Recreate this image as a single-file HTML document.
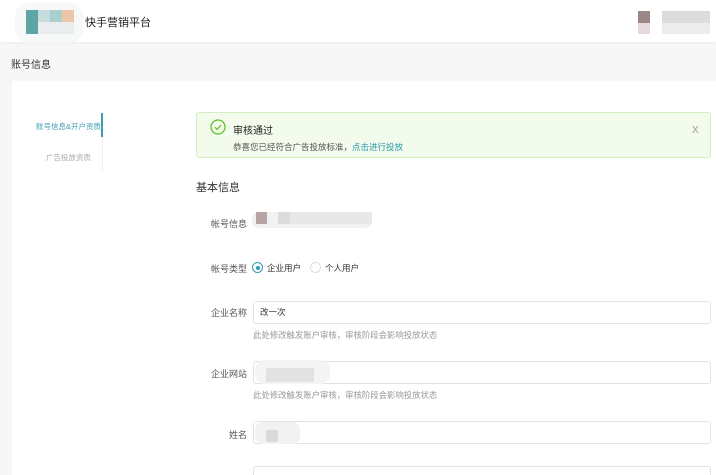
<!DOCTYPE html><html><head><meta charset="utf-8"><style>
*{margin:0;padding:0;box-sizing:border-box}
html,body{width:716px;height:475px;overflow:hidden}
body{background:#f7f7f7;font-family:"Liberation Sans","Noto Sans CJK SC",sans-serif;color:#333;position:relative}
.a{position:absolute;white-space:nowrap}
.hd{left:0;top:0;width:716px;height:42px;background:#fff;box-shadow:0 1px 3px rgba(0,0,0,.05)}
.card{left:12px;top:81px;width:704px;height:394px;background:#fff}
.lbl{font-size:9px;color:#555;text-align:right;width:60px;left:187px}
.inp{left:253px;width:458px;height:23px;border:1px solid #e3e3e3;border-radius:3px;background:#fff}
.hint{left:253px;font-size:8.4px;color:#999}
.px{position:absolute}
</style></head><body>
<div class="a hd"></div>
<div class="px" style="left:15px;top:3px;width:68px;height:40px;background:#f7f8f8;border-radius:14px"></div>
<div class="px" style="left:26px;top:10px;width:12px;height:24px;background:#5fa5a6"></div>
<div class="px" style="left:38px;top:10px;width:12px;height:12px;background:#c6dcdd"></div>
<div class="px" style="left:50px;top:10px;width:12px;height:12px;background:#a9cfd0"></div>
<div class="px" style="left:62px;top:10px;width:12px;height:12px;background:#efc6a5"></div>
<div class="px" style="left:38px;top:22px;width:36px;height:12px;background:#eaedee"></div>
<div class="a" style="left:85px;top:14px;font-size:11px;color:#222">快手营销平台</div>
<div class="px" style="left:638px;top:11px;width:12px;height:12px;background:#9a8787"></div>
<div class="px" style="left:638px;top:23px;width:12px;height:11px;background:#e7d9de"></div>
<div class="px" style="left:662px;top:11px;width:48px;height:12px;background:#dcdcdc"></div>
<div class="px" style="left:662px;top:23px;width:48px;height:11px;background:#ececec"></div>
<div class="a" style="left:11px;top:56px;font-size:10px;color:#333">账号信息</div>
<div class="a card"></div>
<div class="a" style="left:36px;top:121px;font-size:7.5px;color:#3a9fb0">账号信息&amp;开户资质</div>
<div class="a" style="left:101px;top:113px;width:2px;height:24px;background:#3a9fb0"></div>
<div class="a" style="left:102px;top:137px;width:1px;height:33px;background:#eee"></div>
<div class="a" style="left:46px;top:152px;font-size:7.5px;color:#aaa">广告投放资质</div>
<div class="a" style="left:196px;top:112px;width:515px;height:46px;background:#f3fbec;border:1px solid #d3eebd;border-radius:3px"></div>
<svg class="a" style="left:210px;top:119px" width="16" height="16" viewBox="0 0 16 16"><circle cx="8" cy="8" r="7" fill="none" stroke="#5cc22a" stroke-width="1.3"/><path d="M5 8.2l2.2 2.2L11 6" fill="none" stroke="#5cc22a" stroke-width="1.3"/></svg>
<div class="a" style="left:233px;top:122px;font-size:10px;color:#222">审核通过</div>
<div class="a" style="left:233px;top:141px;font-size:8.5px;color:#555">恭喜您已经符合广告投放标准，<span style="color:#2a9bb0">点击进行投放</span></div>
<div class="a" style="left:692px;top:125px;font-size:10px;color:#999">X</div>
<div class="a" style="left:196px;top:179px;font-size:11px;color:#333">基本信息</div>
<div class="a lbl" style="top:217px">帐号信息</div>
<div class="px" style="left:252px;top:212px;width:120px;height:16px;background:#f2f2f2;border-radius:6px"></div>
<div class="px" style="left:256px;top:212px;width:11px;height:12px;background:#b7a5a5"></div>
<div class="px" style="left:278px;top:212px;width:12px;height:12px;background:#dcdcdc"></div>
<div class="px" style="left:290px;top:212px;width:82px;height:12px;background:#e8e8e8"></div>
<div class="a lbl" style="top:262px">帐号类型</div>
<div class="a" style="left:252px;top:262px;width:11px;height:11px;border:1px solid #2a9bb0;border-radius:50%"></div>
<div class="a" style="left:255.5px;top:265.5px;width:4px;height:4px;background:#2a9bb0;border-radius:50%"></div>
<div class="a" style="left:267px;top:262px;font-size:8.5px">企业用户</div>
<div class="a" style="left:310px;top:262px;width:11px;height:11px;border:1px solid #ddd;border-radius:50%"></div>
<div class="a" style="left:325px;top:262px;font-size:8.5px">个人用户</div>
<div class="a lbl" style="top:306px">企业名称</div>
<div class="a inp" style="top:301px"></div>
<div class="a" style="left:260px;top:306px;font-size:8.5px">改一次</div>
<div class="a hint" style="top:329px">此处修改触发账户审核，审核阶段会影响投放状态</div>
<div class="a lbl" style="top:367px">企业网站</div>
<div class="a inp" style="top:361px"></div>
<div class="px" style="left:255px;top:360px;width:75px;height:24px;background:#f4f4f4;border-radius:10px"></div>
<div class="px" style="left:266px;top:368px;width:48px;height:14px;background:#e2e2e2"></div>
<div class="a hint" style="top:389px">此处修改触发账户审核，审核阶段会影响投放状态</div>
<div class="a lbl" style="top:428px">姓名</div>
<div class="a inp" style="top:421px"></div>
<div class="px" style="left:255px;top:422px;width:45px;height:22px;background:#f2f2f2;border-radius:8px"></div>
<div class="px" style="left:266px;top:430px;width:12px;height:12px;background:#dadada"></div>
<div class="a inp" style="top:466px"></div>
</body></html>
